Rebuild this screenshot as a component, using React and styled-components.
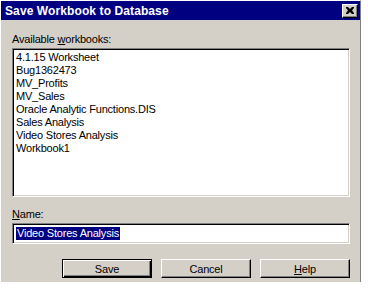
import React from "react";
import styled, { createGlobalStyle } from "styled-components";

const Global = createGlobalStyle`
  html, body { margin: 0; padding: 0; background: #ffffff; }
  body { font-family: "Liberation Sans", Arial, sans-serif; }
`;

const Dialog = styled.div`
  width: 361px;
  height: 282px;
  box-sizing: border-box;
  background: #d4d0c8;
  border-right: 1px solid #808080;
  border-left: 1px solid #ffffff;
  border-top: 1px solid #ffffff;
  display: flex;
  flex-direction: column;
  font-size: 11px;
  letter-spacing: -0.2px;
  color: #000;
`;

const TitleBar = styled.div`
  height: 19px;
  background: #000080;
  display: flex;
  align-items: center;
  justify-content: space-between;
  padding: 0 2px 0 4px;
`;

const Title = styled.span`
  color: #fff;
  font-weight: bold;
  font-size: 12px;
  letter-spacing: 0.1px;
`;

const CloseButton = styled.div`
  width: 16px;
  height: 14px;
  box-sizing: border-box;
  background: #d4d0c8;
  border-top: 1px solid #fff;
  border-left: 1px solid #fff;
  border-right: 1px solid #000;
  border-bottom: 1px solid #000;
  box-shadow: inset -1px -1px 0 #808080;
  display: flex;
  align-items: center;
  justify-content: center;
`;

const Body = styled.div`
  display: flex;
  flex-direction: column;
  padding: 0 10px 0 11px;
`;

const Label = styled.div`
  line-height: 13px;
  margin-top: ${(p) => p.$top}px;
`;

const Sunken = styled.div`
  box-sizing: border-box;
  background: #fff;
  border-top: 1px solid #808080;
  border-left: 1px solid #808080;
  border-right: 1px solid #fff;
  border-bottom: 1px solid #fff;
  box-shadow: inset 1px 1px 0 #000, inset -1px -1px 0 #d4d0c8;
`;

const List = styled(Sunken)`
  margin-top: 2px;
  height: 149px;
  padding: 2px 3px;
`;

const Item = styled.div`
  line-height: 13px;
  height: 13px;
  white-space: nowrap;
`;

const Input = styled(Sunken)`
  margin-top: 2px;
  height: 21px;
  padding: 4px 3px;
  display: flex;
  align-items: center;
`;

const Selected = styled.span`
  background: #000080;
  color: #fff;
  line-height: 13px;
  padding: 0 1px;
`;

const Buttons = styled.div`
  display: flex;
  justify-content: flex-end;
  gap: 9px;
  margin-top: 15px;
`;

const Button = styled.div`
  width: 90px;
  height: 19px;
  box-sizing: border-box;
  display: flex;
  align-items: center;
  justify-content: center;
  background: #d4d0c8;
  border-top: 1px solid ${(p) => (p.$default ? "#000" : "#fff")};
  border-left: 1px solid ${(p) => (p.$default ? "#000" : "#fff")};
  border-right: 1px solid #000;
  border-bottom: 1px solid #000;
  box-shadow: ${(p) =>
    p.$default
      ? "inset 1px 1px 0 #fff, inset -1px -1px 0 #000, inset -2px -2px 0 #808080"
      : "inset -1px -1px 0 #808080"};
`;

const U = styled.span`
  text-decoration: underline;
`;

const items = [
  "4.1.15 Worksheet",
  "Bug1362473",
  "MV_Profits",
  "MV_Sales",
  "Oracle Analytic Functions.DIS",
  "Sales Analysis",
  "Video Stores Analysis",
  "Workbook1",
];

export default function App() {
  return (
    <>
      <Global />
      <Dialog>
        <TitleBar>
          <Title>Save Workbook to Database</Title>
          <CloseButton>
            <svg width="8" height="7" viewBox="0 0 8 7">
              <path d="M0 0h2l2 2 2-2h2v1L6 3.5 8 6v1H6L4 5 2 7H0V6l2-2.5L0 1z" fill="#000" />
            </svg>
          </CloseButton>
        </TitleBar>
        <Body>
          <Label $top={13}>
            Available <U>w</U>orkbooks:
          </Label>
          <List>
            {items.map((t) => (
              <Item key={t}>{t}</Item>
            ))}
          </List>
          <Label $top={11}>
            <U>N</U>ame:
          </Label>
          <Input>
            <Selected>Video Stores Analysis</Selected>
          </Input>
          <Buttons>
            <Button $default>Save</Button>
            <Button>Cancel</Button>
            <Button>
              <span>
                <U>H</U>elp
              </span>
            </Button>
          </Buttons>
        </Body>
      </Dialog>
    </>
  );
}
